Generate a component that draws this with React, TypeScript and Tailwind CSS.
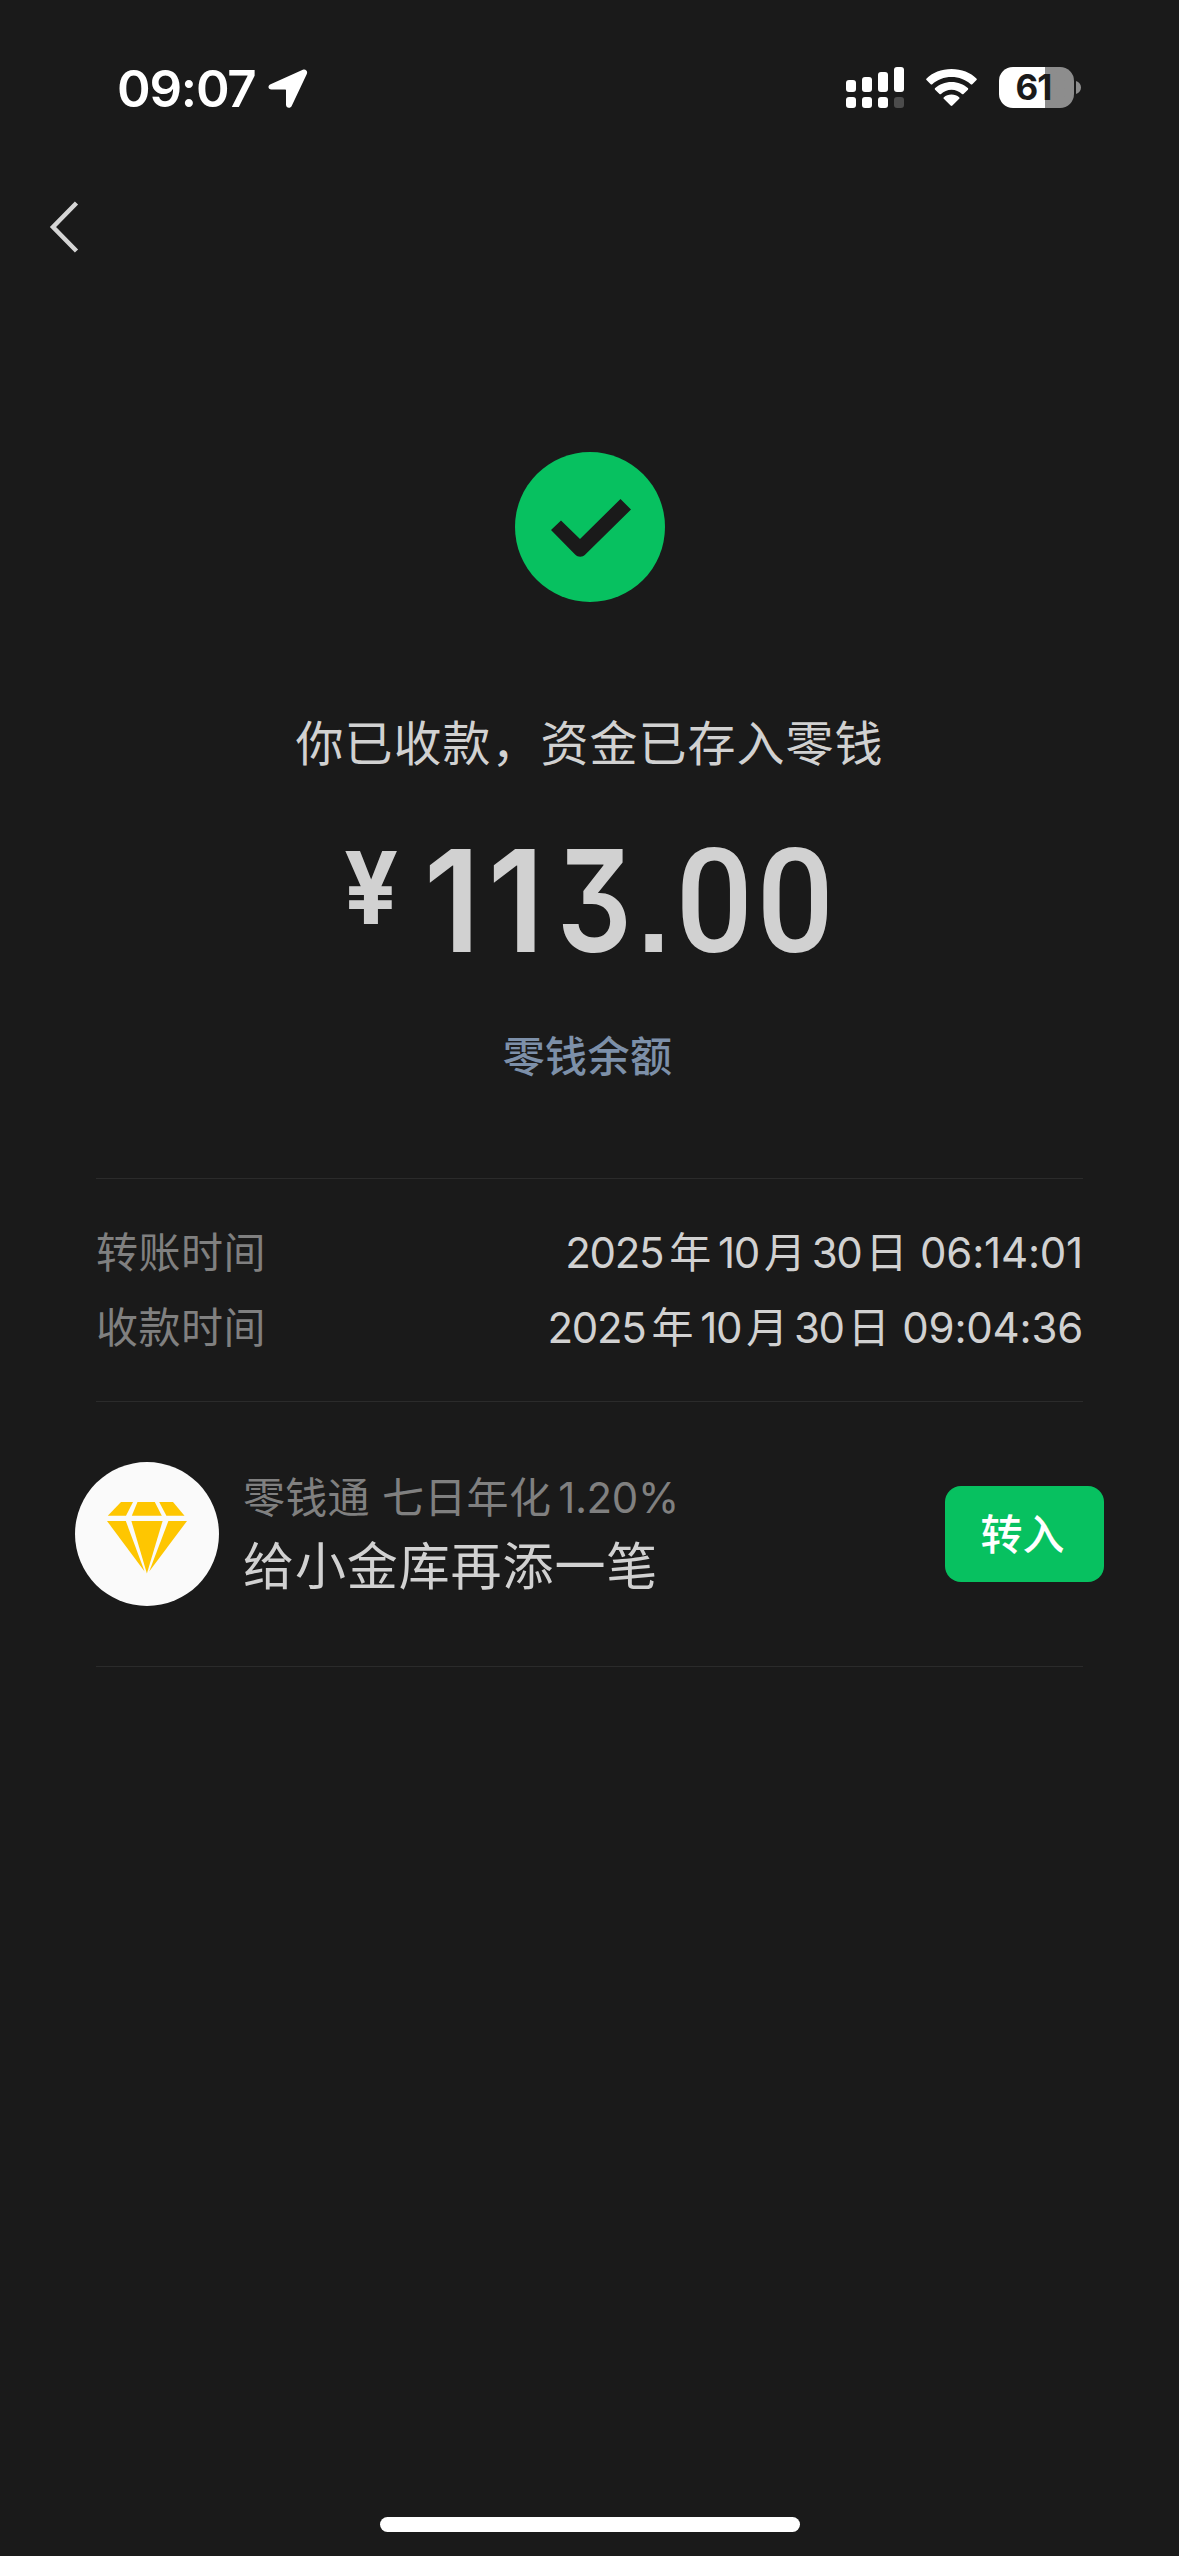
const SIGNAL_BARS = [
  { x: 0, top: 13, dim: false },
  { x: 16, top: 10, dim: false },
  { x: 32, top: 5, dim: false },
  { x: 48, top: 0, dim: true },
];

// Condensed numerals: every glyph sits in its own cell
const AMOUNT_GLYPHS = [
  { char: "1", cell: "w-[64px]", glyph: "scale-x-[0.94] font-semibold" },
  { char: "1", cell: "w-[64px]", glyph: "scale-x-[0.94] font-semibold" },
  { char: "3", cell: "w-[74px] ml-[9px]", glyph: "scale-x-[0.83] font-semibold" },
  { char: ".", cell: "w-[34px] ml-[6px]", glyph: "scale-x-[0.9] font-medium" },
  { char: "0", cell: "w-[81px] ml-[3px]", glyph: "scale-x-[0.94] font-['Roboto'] text-[145px] font-medium" },
  { char: "0", cell: "w-[81px]", glyph: "scale-x-[0.94] font-['Roboto'] text-[145px] font-medium" },
];

const DETAILS = [
  { label: "转账时间", year: "2025", month: "10", day: "30", time: "06:14:01" },
  { label: "收款时间", year: "2025", month: "10", day: "30", time: "09:04:36" },
];

function StatusBar() {
  return (
    <header className="flex h-[176px] items-start justify-between pl-[117px] pr-[98px] pt-[57px] text-white">
      <div className="flex items-center">
        <span className="w-[151px] whitespace-nowrap pt-px text-[51px] font-semibold leading-[62px] tracking-[-1.2px]">
          09:07
        </span>
        {/* Location */}
        <svg width="40" height="40" viewBox="0 0 40 40" fill="currentColor">
          <path d="M34.8 0.8 L2.6 15.2 C-0.8 16.8 0.2 20.6 3.4 20.6 H17 C17.7 20.6 18 20.9 18 21.6 V35.6 C18 39.4 22.4 40 23.8 36.8 L38.8 5 C40 2.2 37.6 -0.4 34.8 0.8 Z" />
        </svg>
      </div>

      <div className="flex items-center pt-[10px]">
        {/* Signal */}
        <svg width="58" height="41" viewBox="0 0 58 41" fill="currentColor">
          {SIGNAL_BARS.map((bar) => (
            <g key={bar.x}>
              <rect x={bar.x} y={bar.top} width="10" height={25 - bar.top} rx="3" />
              <rect x={bar.x} y="30" width="10" height="11" rx="3" opacity={bar.dim ? 0.22 : 1} />
            </g>
          ))}
        </svg>

        {/* Wi-Fi */}
        <svg className="ml-[22px]" width="51" height="41" viewBox="0 0 51 41" fill="currentColor">
          <path d="M25.5 2 C35.6 2 44.7 5.8 50.4 11.4 C51 12 51 12.6 50.5 13.1 L46.3 17.2 C45.8 17.7 45.2 17.6 44.7 17.2 C39.7 12.7 33 10 25.5 10 C18 10 11.3 12.7 6.3 17.2 C5.8 17.6 5.2 17.7 4.7 17.2 L0.5 13.1 C0 12.6 0 12 0.6 11.4 C6.3 5.8 15.4 2 25.5 2 Z" />
          <path d="M25.5 15 C32 15 37.6 17.4 41.8 21.1 C42.4 21.6 42.4 22.2 41.9 22.7 L37.5 27 C37 27.5 36.5 27.4 36 27 C33.2 24.5 29.6 22.8 25.5 22.8 C21.4 22.8 17.8 24.5 15 27 C14.5 27.4 14 27.5 13.5 27 L9.1 22.7 C8.6 22.2 8.6 21.6 9.2 21.1 C13.4 17.4 19 15 25.5 15 Z" />
          <path d="M25.5 27.6 C28.5 27.6 31.2 28.7 33.1 30.3 C33.7 30.8 33.7 31.3 33.2 31.8 L26.4 38.6 C25.8 39.2 25.2 39.2 24.6 38.6 L17.8 31.8 C17.3 31.3 17.3 30.8 17.9 30.3 C19.8 28.7 22.5 27.6 25.5 27.6 Z" />
        </svg>

        {/* Battery */}
        <div className="ml-[22px] flex items-center gap-[2px]">
          <div className="flex h-[41px] w-[75px] items-center justify-center rounded-[14px] bg-linear-to-r from-white from-[46px] to-[#8d8d8d] to-[46px] pr-[6px]">
            <span className="text-[35px] font-bold leading-[41px] tracking-[-1px] text-[#1a1a1a]">61</span>
          </div>
          <svg width="5" height="13" viewBox="0 0 5 13" fill="#8d8d8d">
            <path d="M0 0 C3 1 5 3.4 5 6.5 C5 9.6 3 12 0 13 Z" />
          </svg>
        </div>
      </div>
    </header>
  );
}

function DiamondBadge() {
  return (
    <div className="flex h-36 w-36 shrink-0 justify-center rounded-full bg-[#fafafa] pt-10">
      <svg width="80" height="73" viewBox="0 0 80 73" fill="#fec601">
        <path d="M14 0 H26 L19 13.7 H0.8 Z" />
        <path d="M30.5 0 H47.8 L54.8 13.7 H24.8 Z" />
        <path d="M52.2 0 H66 L77.5 13.7 H59.4 Z" />
        <path d="M0 19 H18.8 L37.6 69.4 Z" />
        <path d="M24.4 19 H55.6 L39.9 71.5 Z" />
        <path d="M61.4 19 H80 L42.2 69.4 Z" />
      </svg>
    </div>
  );
}

function Amount() {
  return (
    <div className="mt-[52px] flex h-[160px] w-[1179px] items-start pl-[344px] text-[#d1d1d1]">
      <span className="mt-[6px] w-[76px] text-[100px] font-bold leading-[100px]">
        <span className="inline-block origin-left scale-x-[0.95]">¥</span>
      </span>
      <div className="-mt-[12px] flex items-baseline text-[142px] leading-[160px] [font-feature-settings:'cv09','ss07']">
        {AMOUNT_GLYPHS.map((item, i) => (
          <span key={i} className={`flex shrink-0 justify-center ${item.cell}`}>
            <span className={`inline-block leading-[160px] ${item.glyph}`}>{item.char}</span>
          </span>
        ))}
      </div>
    </div>
  );
}

export default function App() {
  return (
    <div className="flex h-[2556px] w-[1179px] flex-col bg-[#1a1a1a] font-['Inter','Noto_Sans_CJK_SC',sans-serif]">
      <StatusBar />

      <nav className="h-[276px] pl-[49px] pt-[24px]">
        <button aria-label="返回" className="block">
          <svg width="30" height="54" viewBox="0 0 30 54" fill="none" stroke="#d5d5d5" strokeWidth="4.5">
            <path d="M27.5 3 L4 27 L27.5 51" />
          </svg>
        </button>
      </nav>

      <main className="flex flex-col">
        <section className="flex flex-col items-center">
          <svg width="150" height="150" viewBox="0 0 150 150">
            <circle cx="75" cy="75" r="75" fill="#07c160" />
            <path
              d="M36 78 L46 68.5 L65 87 L105.5 47 L116 57.5 L70.3 102.6 C67.3 105.6 63.1 105.6 60.1 102.6 Z"
              fill="#1a1a1a"
            />
          </svg>

          <p className="mt-[106px] text-[48px] leading-[72px] tracking-[1px] text-[#d1d1d1]">
            你已收款，资金已存入零钱
          </p>
          <Amount />
          <a className="mr-[4px] mt-[34px] text-[42px] font-medium leading-[62px] tracking-[0.4px] text-[#7d90a9]">
            零钱余额
          </a>
        </section>

        <section className="mx-24 mt-[90px] flex h-[224px] flex-col justify-center border-y border-[#2b2b2b] text-[42px] leading-[75px]">
          {DETAILS.map((row) => (
            <div key={row.label} className="flex justify-between whitespace-nowrap">
              <span className="tracking-[0.5px] text-[#808080]">{row.label}</span>
              <span className="text-[#d1d1d1]">
                <span className="tracking-[-1.3px]">
                  {row.year}
                  <span className="ml-[6px] mr-[8px]">年</span>
                  {row.month}
                  <span className="ml-[5px] mr-[7px]">月</span>
                  {row.day}
                  <span className="ml-[4px] mr-[2px]">日</span>
                </span>{" "}
                <span className="tracking-[-0.2px]">{row.time}</span>
              </span>
            </div>
          ))}
        </section>

        <section className="ml-[75px] mr-[75px] mt-[60px] flex items-center">
          <DiamondBadge />
          <div className="ml-[24px] flex-1 whitespace-nowrap pt-[3px]">
            <p className="text-[42px] leading-[62px] text-[#808080]">
              <span className="mr-[7px] tracking-[0.3px]">零钱通 七日年化</span>
              <span className="tracking-[-0.4px]">1.20%</span>
            </p>
            <p className="text-[51px] leading-[75px] tracking-[0.9px] text-[#d1d1d1]">给小金库再添一笔</p>
          </div>
          <button className="h-24 w-[159px] rounded-2xl bg-[#07c160] pr-[4px] text-[42px] font-medium text-white">
            转入
          </button>
        </section>
        <div className="mx-24 mt-[60px] h-px bg-[#2b2b2b]" />
      </main>

      {/* Home indicator */}
      <div className="mx-auto mb-6 mt-auto h-[15px] w-[420px] rounded-full bg-white" />
    </div>
  );
}
